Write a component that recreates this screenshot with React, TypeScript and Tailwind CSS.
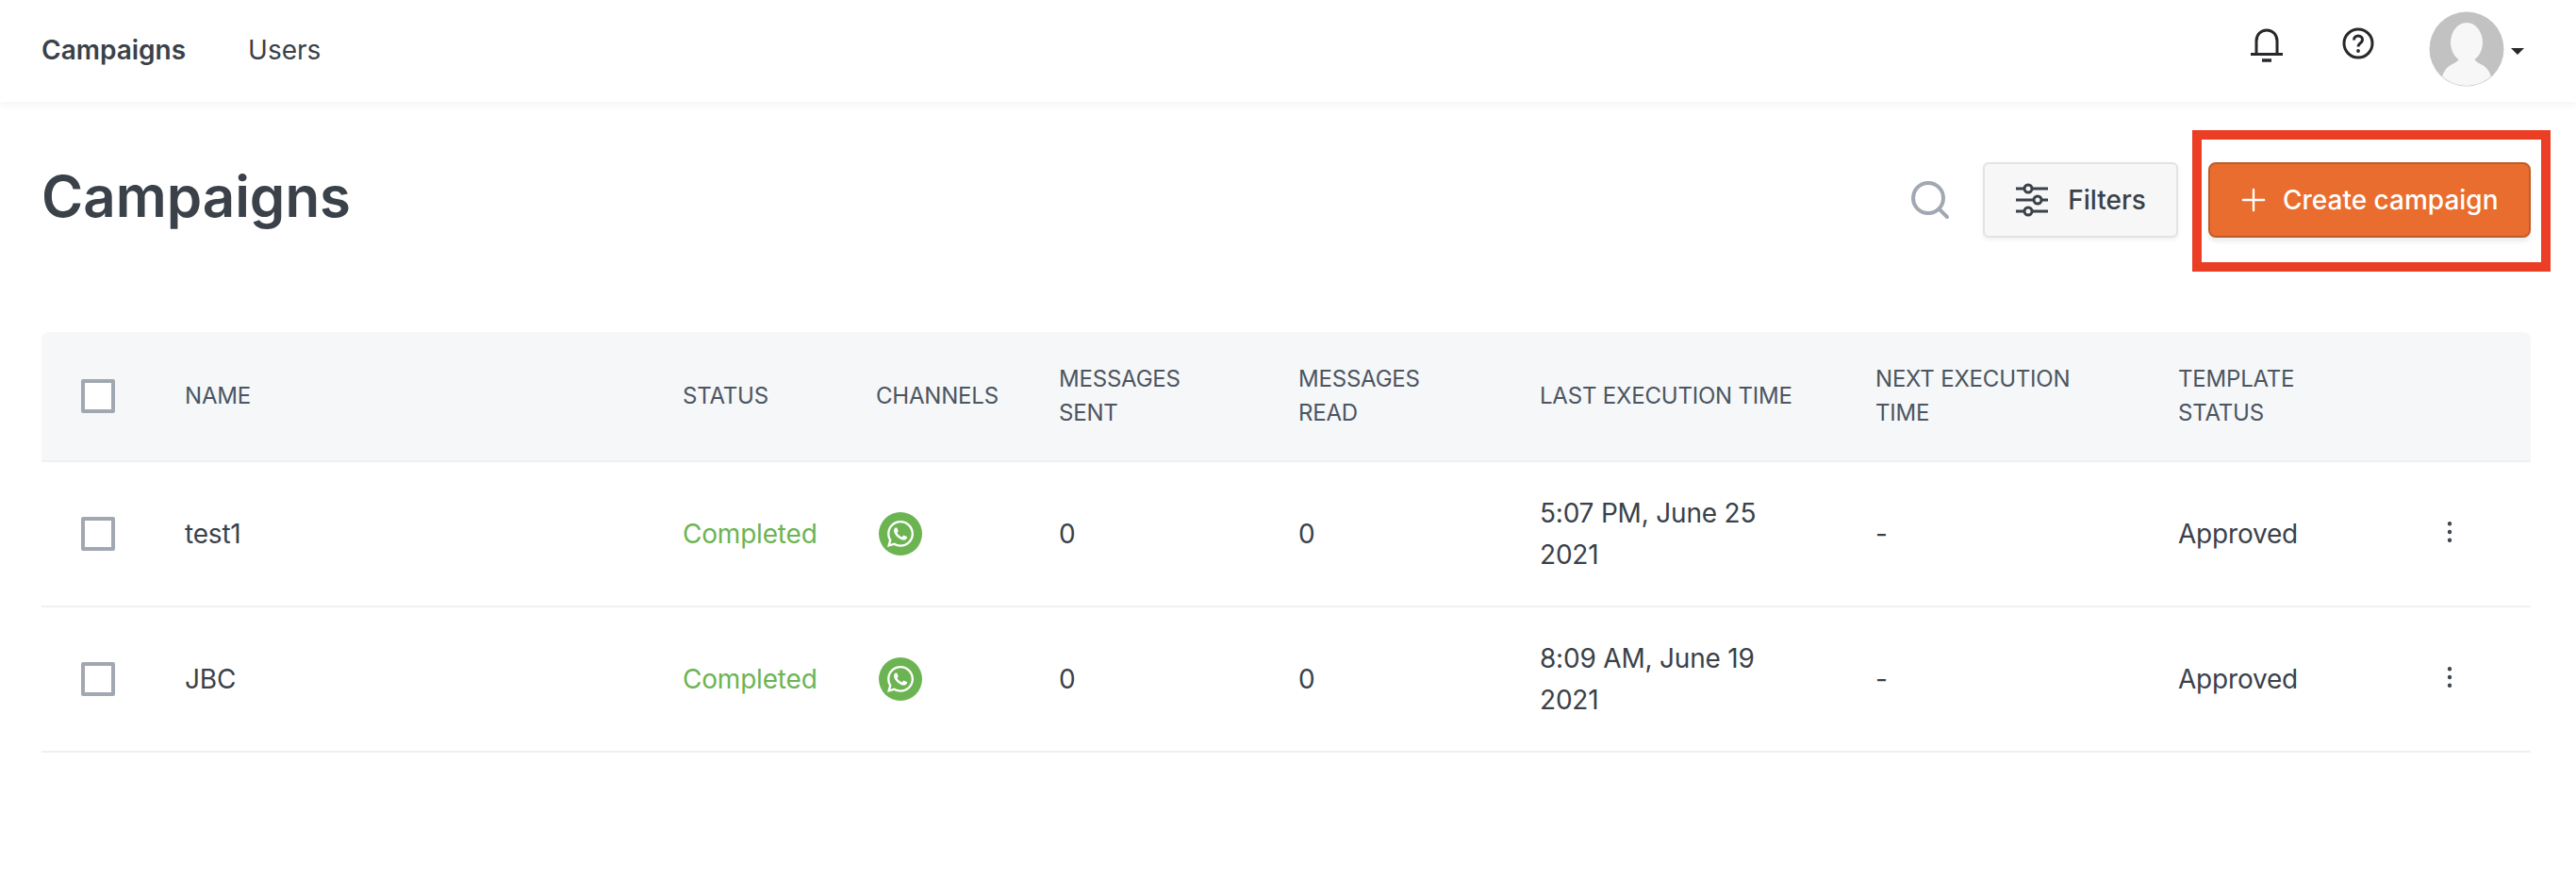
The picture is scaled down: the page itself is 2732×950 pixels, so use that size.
import { EllipsisVertical, Plus, Search } from "lucide-react";
import { FaWhatsapp } from "react-icons/fa";

interface Campaign {
  name: string;
  time: string;
}

const campaigns: Campaign[] = [
  { name: "test1", time: "5:07 PM, June 25 2021" },
  { name: "JBC", time: "8:09 AM, June 19 2021" },
];

function Checkbox() {
  return <span className="block h-[36px] w-[36px] rounded-[2px] border-[4px] border-[#a1a8b1] bg-white" />;
}

function BellIcon() {
  return (
    <svg width="36" height="36" viewBox="0 0 36 36" fill="none" stroke="#26282b" strokeWidth="3">
      <path d="M7 27V13.5C7 7 11.5 2 18 2s11 5 11 11.500V27" />
      <path d="M1 27.500h34" />
      <path d="M13 34h10" strokeWidth="3.500" />
    </svg>
  );
}

function HelpIcon() {
  return (
    <svg width="34" height="34" viewBox="0 0 34 34" fill="none" stroke="#26282b" strokeWidth="3">
      <circle cx="17" cy="17" r="15" />
      <path d="M12.500 13.500c0-2.800 2-4.500 4.500-4.500s4.500 1.700 4.500 4.200c0 3.400-4.500 3.600-4.500 7.300" strokeWidth="3" />
      <circle cx="17" cy="25" r="1.900" fill="#26282b" stroke="none" />
    </svg>
  );
}

function Avatar() {
  return (
    <svg width="80" height="80" viewBox="0 0 80 80">
      <defs>
        <clipPath id="avatar-clip">
          <circle cx="40" cy="40" r="39" />
        </clipPath>
      </defs>
      <circle cx="40" cy="40" r="39.500" fill="#c2c2c2" />
      <g clipPath="url(#avatar-clip)" fill="#f7f7f7">
        <ellipse cx="40" cy="33" rx="17" ry="21" />
        <path d="M33 48h14c1 4 4 6 10 9 7 4 10 12 11 23H12c1-11 4-19 11-23 6-3 9-5 10-9z" />
      </g>
    </svg>
  );
}

function FiltersIcon() {
  return (
    <svg width="36" height="36" viewBox="0 0 36 36" fill="none" stroke="#3a4149" strokeWidth="3">
      <path d="M1 6h9M18 6h17M1 18h19M28 18h7M1 30h9M18 30h17" />
      <circle cx="14" cy="6" r="4" />
      <circle cx="24" cy="18" r="4" />
      <circle cx="14" cy="30" r="4" />
    </svg>
  );
}

export default function App() {
  return (
    <div className="min-h-[950px] bg-white font-['Inter',sans-serif] text-[#3a4149]">
      <header className="flex h-[108px] items-center justify-between pl-[44px] pr-[55px] shadow-[0_3px_8px_rgba(58,65,73,0.06)]">
        <nav className="-mt-[3px] flex items-center gap-[66px] text-[28px]">
          <a className="font-semibold">Campaigns</a>
          <a>Users</a>
        </nav>
        <div className="-mt-[4px] flex items-center">
          <span className="-mt-[9px]">
            <BellIcon />
          </span>
          <span className="-mt-[12px] ml-[62px]">
            <HelpIcon />
          </span>
          <span className="ml-[58px]">
            <Avatar />
          </span>
          <span className="ml-[7px] mt-[4px] h-0 w-0 border-x-[7px] border-t-[7px] border-x-transparent border-t-[#26282b]" />
        </div>
      </header>

      <main className="pl-[44px] pr-[48px] pt-[64px]">
        <div className="flex h-[80px] items-center justify-between">
          <h1 className="-mt-[8px] text-[60px] font-semibold leading-none">Campaigns</h1>
          <div className="flex items-center">
            <Search size={48} strokeWidth={2} className="text-[#a1a8b1]" />
            <button className="ml-[32px] flex h-[80px] w-[207px] items-center justify-center gap-[20px] rounded-[6px] border-[2px] border-[#e2e3e4] bg-[#f7f7f7] text-[28px] font-medium shadow-[0_2px_4px_rgba(58,65,73,0.08)]">
              <FiltersIcon />
              Filters
            </button>
            <div className="relative ml-[32px]">
              <button className="flex h-[80px] w-[342px] items-center gap-[12px] rounded-[8px] border-[2px] border-[#be5d2b] bg-[#e96d2e] pl-[27px] text-[28px] font-medium text-white shadow-[0_4px_4px_rgba(58,65,73,0.1)]">
                <Plus size={38} strokeWidth={1.5} />
                Create campaign
              </button>
              <span className="absolute -bottom-[36px] -left-[17px] -right-[21px] -top-[34px] border-[10px] border-[#ea3f24]" />
            </div>
          </div>
        </div>

        <table className="mt-[100px] w-full table-fixed border-collapse text-left">
          <colgroup>
            <col className="w-[152px]" />
            <col className="w-[528px]" />
            <col className="w-[205px]" />
            <col className="w-[194px]" />
            <col className="w-[254px]" />
            <col className="w-[256px]" />
            <col className="w-[356px]" />
            <col className="w-[321px]" />
            <col />
          </colgroup>
          <thead>
            <tr className="h-[137px] border-b-[2px] border-[#eef0f1] bg-[#f6f7f9] text-[24px] font-normal leading-[36px] tracking-[-0.2px] text-[#4c5560]">
              <th className="rounded-tl-[8px] pl-[42px] font-normal">
                <Checkbox />
              </th>
              <th className="font-normal">NAME</th>
              <th className="font-normal">STATUS</th>
              <th className="font-normal">CHANNELS</th>
              <th className="pr-[60px] font-normal">MESSAGES SENT</th>
              <th className="pr-[60px] font-normal">MESSAGES READ</th>
              <th className="font-normal">LAST EXECUTION TIME</th>
              <th className="pr-[60px] font-normal">NEXT EXECUTION TIME</th>
              <th className="rounded-tr-[8px] pr-[200px] font-normal">TEMPLATE STATUS</th>
            </tr>
          </thead>
          <tbody className="text-[28px] leading-[44px] tracking-[-0.2px]">
            {campaigns.map((campaign) => (
              <tr key={campaign.name} className="h-[154px] border-b-[2px] border-[#eef0f1]">
                <td className="pl-[42px]">
                  <Checkbox />
                </td>
                <td>{campaign.name}</td>
                <td className="text-[#6cb452]">Completed</td>
                <td>
                  <span className="ml-[3px] flex h-[46px] w-[46px] items-center justify-center rounded-full bg-[#6cb452] text-white">
                    <FaWhatsapp size={32} />
                  </span>
                </td>
                <td>0</td>
                <td>0</td>
                <td className="pr-[70px]">{campaign.time}</td>
                <td>-</td>
                <td>
                  <div className="flex items-center justify-between pr-[71px]">
                    Approved
                    <EllipsisVertical size={30} strokeWidth={1.5} className="-mt-[4px]" />
                  </div>
                </td>
              </tr>
            ))}
          </tbody>
        </table>
      </main>
    </div>
  );
}
